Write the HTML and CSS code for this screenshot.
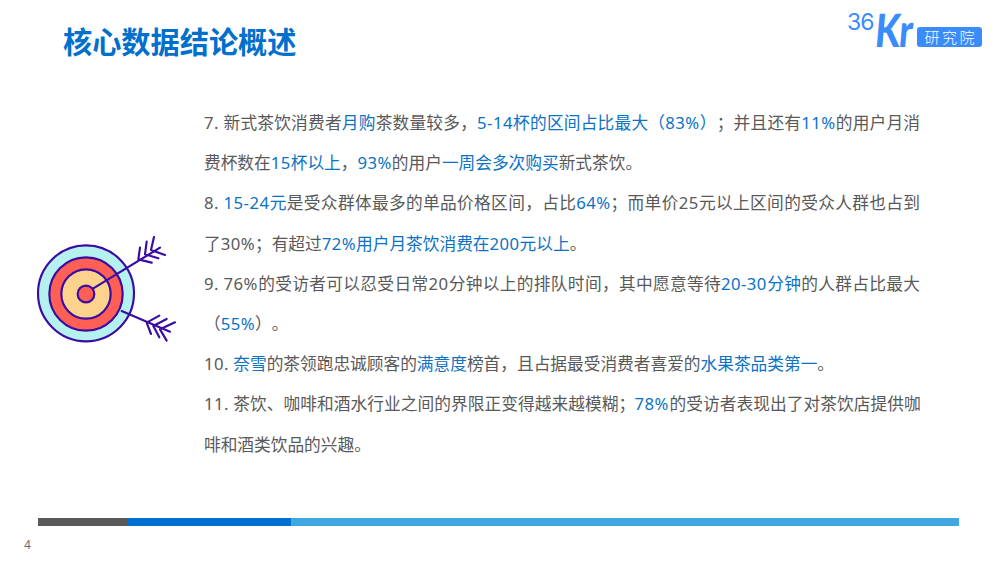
FILE: index.html
```html
<!DOCTYPE html>
<html lang="zh-CN">
<head>
<meta charset="utf-8">
<title>核心数据结论概述</title>
<link rel="stylesheet" href="styles.css">
</head>
<body>
<div class="slide">
  <header class="header">
    <h1 class="title">核心数据结论概述</h1>
    <div class="logo">
      <span class="logo-num">36</span>
      <span class="logo-kr">Kr</span>
      <span class="logo-badge">研究院</span>
    </div>
  </header>
  <main class="main">
    <svg class="target" viewBox="0 0 480 390" aria-hidden="true">
      <g stroke="#3a0ca3" stroke-width="6.5" stroke-linecap="round" stroke-linejoin="round" fill="none">
        <circle cx="183" cy="205" r="144" fill="#b5f1ef"/>
        <circle cx="183" cy="207" r="110" fill="#ff5f55"/>
        <circle cx="183" cy="207" r="74" fill="#fdd28c"/>
        <circle cx="183" cy="207" r="25" fill="#ff5f55"/>
        <path d="M205 190L405 68"/>
        <path d="M345 68L340 103L380 113M365 50L360 88L400 100M387 36L378 75L420 90"/>
        <path d="M290 258L435 320"/>
        <path d="M403 272L365 293L378 327M425 282L385 303L403 337M450 292L405 313L425 347"/>
      </g>
    </svg>
    <div class="content">
      <p class="line just"><span class="n">7.</span> 新式茶饮消费者<em>月购</em>茶数量较多，<em><span class="n">5-14</span>杯的区间占比最大（<span class="n">83%</span>）</em>；并且还有<em><span class="n">11%</span></em>的用户月消</p>
      <p class="line">费杯数在<em><span class="n">15</span>杯以上</em>，<em><span class="n">93%</span></em>的用户<em>一周会多次购买</em>新式茶饮。</p>
      <p class="line just"><span class="n">8.</span> <em><span class="n">15-24</span>元</em>是受众群体最多的单品价格区间，占比<em><span class="n">64%</span></em>；而单价<span class="n">25</span>元以上区间的受众人群也占到</p>
      <p class="line">了<span class="n">30%</span>；有超过<em><span class="n">72%</span>用户月茶饮消费在<span class="n">200</span>元以上</em>。</p>
      <p class="line just"><span class="n">9.</span> <span class="n">76%</span>的受访者可以忍受日常<span class="n">20</span>分钟以上的排队时间，其中愿意等待<em><span class="n">20-30</span>分钟</em>的人群占比最大</p>
      <p class="line">（<em><span class="n">55%</span></em>）。</p>
      <p class="line"><span class="n">10.</span> <em>奈雪</em>的茶领跑忠诚顾客的<em>满意度</em>榜首，且占据最受消费者喜爱的<em>水果茶品类第一</em>。</p>
      <p class="line just tight"><span class="n">11.</span> 茶饮、咖啡和酒水行业之间的界限正变得越来越模糊；<em><span class="n">78%</span></em>的受访者表现出了对茶饮店提供咖</p>
      <p class="line">啡和酒类饮品的兴趣。</p>
    </div>
  </main>
  <div class="bar">
    <span class="bar-gray"></span>
    <span class="bar-blue"></span>
    <span class="bar-light"></span>
  </div>
  <div class="page">4</div>
</div>
</body>
</html>
```
FILE: styles.css
```css
* { box-sizing: border-box; }
html, body { margin: 0; padding: 0; background: #fff; }
.slide {
  width: 1000px;
  height: 563px;
  overflow: hidden;
  font-family: "Noto Sans", "Noto Sans CJK SC", sans-serif;
  display: flex;
  flex-direction: column;
}
.header {
  height: 103px;
  padding: 12px 18px 0 63px;
  display: flex;
  justify-content: space-between;
  align-items: flex-start;
}
.title {
  margin: 0;
  font-size: 29.2px;
  line-height: 60px;
  font-weight: 700;
  color: #0070cc;
  white-space: nowrap;
}
.logo {
  display: flex;
  align-items: flex-start;
  color: #3a8cfb;
  height: 36px;
}
.logo-num {
  width: 26px;
  margin-right: 4px;
  font-family: "Inter", sans-serif;
  font-size: 23px;
  font-weight: 400;
  line-height: 20px;
  letter-spacing: -1px;
}
.logo-kr {
  width: 35px;
  margin-right: 5px;
  font-family: "Lato", sans-serif;
  font-weight: 900;
  font-size: 46px;
  line-height: 36px;
  letter-spacing: -1px;
  white-space: nowrap;
  transform-origin: left top;
  transform: skewX(-5deg) scaleX(0.78);
}
.logo-badge {
  margin-top: 15px;
  width: 65px;
  height: 20px;
  border-radius: 3px;
  background: #3a8cfb;
  color: #fff;
  font-size: 15px;
  line-height: 20px;
  text-align: center;
  letter-spacing: 2.5px;
  text-indent: 2.5px;
  font-weight: 300;
}
.main {
  height: 415px;
  padding-left: 25px;
  display: flex;
  gap: 19px;
}
.target {
  width: 160px;
  height: 130px;
  flex: none;
  margin-top: 122px;
}
.content {
  width: 716px;
  color: #595959;
  font-size: 16.7px;
  text-spacing-trim: space-all;
}
.line {
  margin: 0;
  height: 40.2px;
  line-height: 40.2px;
  white-space: nowrap;
}
.just {
  text-align: justify;
  text-align-last: justify;
  white-space: normal;
}
.tight { letter-spacing: -0.7px; }
.n { letter-spacing: 0.45px; }
.line em {
  font-style: normal;
  color: #0b72c4;
}
.bar {
  margin-left: 38px;
  width: 921px;
  height: 8px;
  display: flex;
  flex: none;
}
.bar-gray { width: 89px; background: #595959; }
.bar-blue { width: 164px; background: #0070d0; }
.bar-light { flex: 1; background: #41a7e0; }
.page {
  margin: 10px 0 0 24px;
  font-size: 12px;
  line-height: 18px;
  color: #6e6e6e;
}
```
